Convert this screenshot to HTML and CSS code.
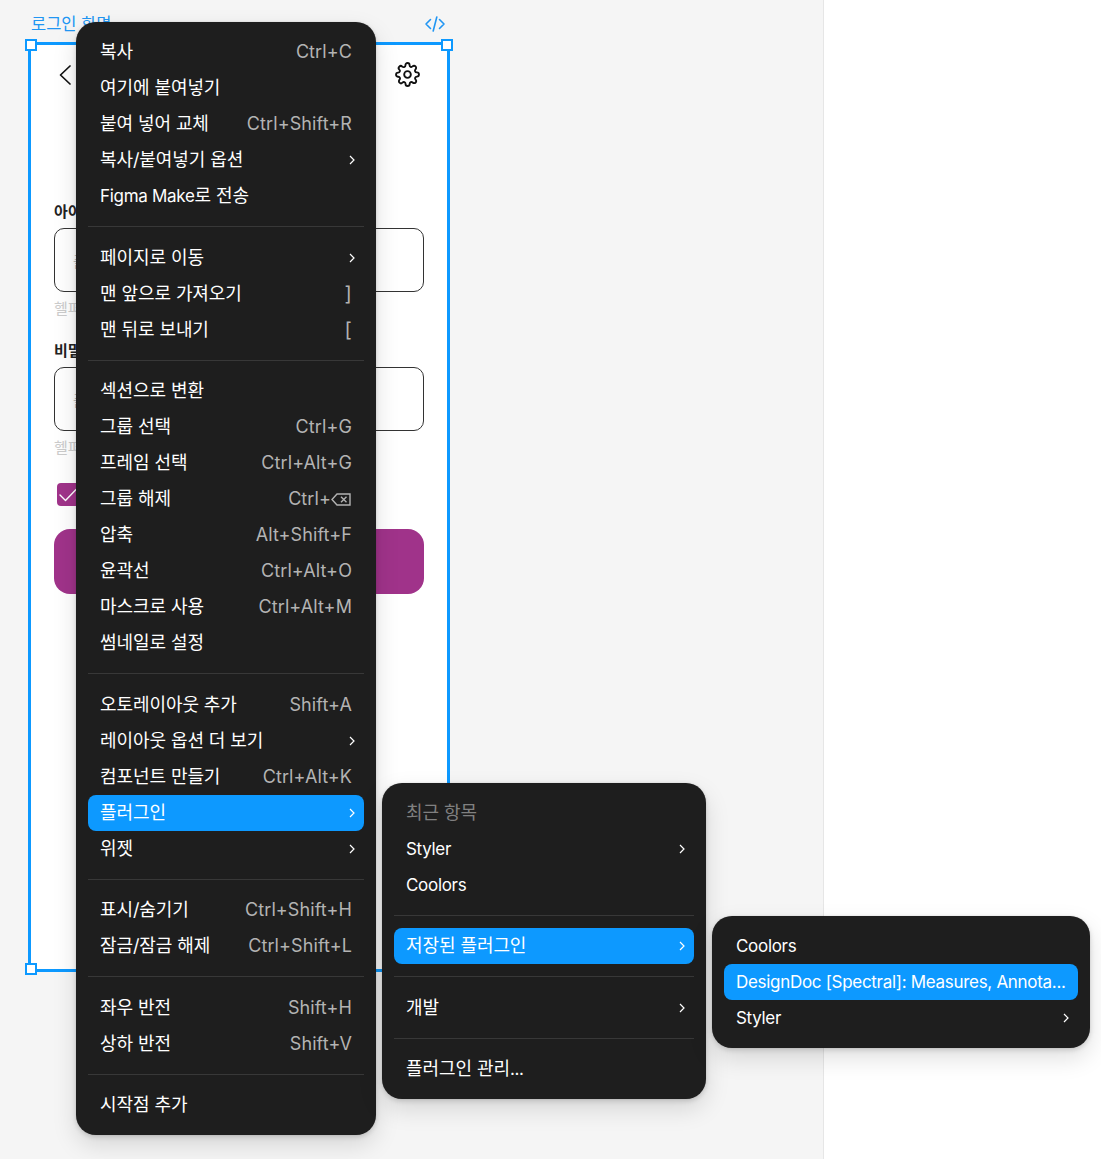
FILE: index.html
```html
<!DOCTYPE html>
<html lang="ko">
<head>
<meta charset="utf-8">
<title>로그인 화면</title>
<link rel="stylesheet" href="styles.css">
</head>
<body>
<div class="app">
  <main class="canvas">
    <div class="frame-title">로그인 화면</div>
    <svg class="code-icon" width="22" height="18" viewBox="0 0 22 18" fill="none" stroke="#2196f3" stroke-width="1.6" stroke-linecap="round" stroke-linejoin="round"><path d="M6.5 4.5 2 9l4.5 4.500M15.500 4.500 20 9l-4.500 4.500M12.800 2 9.200 16"/></svg>
    <section class="frame">
      <header class="frame-head">
        <svg width="14" height="24" viewBox="0 0 14 24" fill="none" stroke="#111" stroke-width="1.7" stroke-linecap="round" stroke-linejoin="round"><path d="M12 3 2.500 12l9.500 9"/></svg>
        <svg width="25" height="25" viewBox="0 0 24 24" fill="none" stroke="#111" stroke-width="1.800" stroke-linecap="round" stroke-linejoin="round"><circle cx="12" cy="12" r="3.200"/><path d="M19.400 15a1.650 1.650 0 0 0 .33 1.820l.06.06a2 2 0 1 1-2.830 2.830l-.06-.06a1.650 1.650 0 0 0-2.800 1.170V21a2 2 0 1 1-4 0v-.09a1.650 1.650 0 0 0-2.870-1.110l-.06.06a2 2 0 1 1-2.830-2.830l.06-.06a1.650 1.650 0 0 0-1.170-2.800H3a2 2 0 1 1 0-4h.09a1.650 1.650 0 0 0 1.110-2.870l-.06-.06a2 2 0 1 1 2.830-2.830l.06.06a1.650 1.650 0 0 0 1.820.33H9a1.650 1.650 0 0 0 1-1.510V3a2 2 0 1 1 4 0v.09a1.650 1.650 0 0 0 2.800 1.170l.06-.06a2 2 0 1 1 2.830 2.830l-.06.06a1.650 1.650 0 0 0-.33 1.820V9a1.650 1.650 0 0 0 1.510 1H21a2 2 0 1 1 0 4h-.09a1.650 1.650 0 0 0-1.510 1z"/></svg>
      </header>
      <form class="login">
        <div class="field">
          <div class="field-label">아이디</div>
          <div class="input"><span class="placeholder">플레이스홀더</span></div>
          <div class="helper">헬퍼 텍스트</div>
        </div>
        <div class="field">
          <div class="field-label">비밀번호</div>
          <div class="input"><span class="placeholder">플레이스홀더</span></div>
          <div class="helper">헬퍼 텍스트</div>
        </div>
        <div class="check">
          <svg width="18" height="14" viewBox="0 0 18 14" fill="none" stroke="#fff" stroke-width="1.400" stroke-linecap="round" stroke-linejoin="round"><path d="M1 7l5.500 5.500L17 1.500"/></svg>
        </div>
        <div class="submit"></div>
      </form>
      <i class="handle handle-tl"></i>
      <i class="handle handle-tr"></i>
      <i class="handle handle-bl"></i>
    </section>
  </main>
  <aside class="panel"></aside>
</div>

<nav class="menu menu-main">
  <div class="item"><span>복사</span><kbd>Ctrl+C</kbd></div>
  <div class="item"><span>여기에 붙여넣기</span></div>
  <div class="item"><span>붙여 넣어 교체</span><kbd>Ctrl+Shift+R</kbd></div>
  <div class="item"><span>복사/붙여넣기 옵션</span><svg class="chev" width="6" height="10" viewBox="0 0 6 10"><path d="M1 1l4 4-4 4"/></svg></div>
  <div class="item"><span><span class="lat">Figma Make</span>로 전송</span></div>
  <hr class="sep">
  <div class="item"><span>페이지로 이동</span><svg class="chev" width="6" height="10" viewBox="0 0 6 10"><path d="M1 1l4 4-4 4"/></svg></div>
  <div class="item"><span>맨 앞으로 가져오기</span><kbd class="kbd-bracket">]</kbd></div>
  <div class="item"><span>맨 뒤로 보내기</span><kbd class="kbd-bracket">[</kbd></div>
  <hr class="sep">
  <div class="item"><span>섹션으로 변환</span></div>
  <div class="item"><span>그룹 선택</span><kbd>Ctrl+G</kbd></div>
  <div class="item"><span>프레임 선택</span><kbd>Ctrl+Alt+G</kbd></div>
  <div class="item"><span>그룹 해제</span><kbd class="kbd-del">Ctrl+<svg width="20" height="13" viewBox="0 0 20 13" fill="none" stroke="#b3b3b3" stroke-width="1.400"><path d="M6 1h13v11H6L1 6.500z"/><path d="M10 3.800l5.500 5.500M15.500 3.800 10 9.300"/></svg></kbd></div>
  <div class="item"><span>압축</span><kbd>Alt+Shift+F</kbd></div>
  <div class="item"><span>윤곽선</span><kbd>Ctrl+Alt+O</kbd></div>
  <div class="item"><span>마스크로 사용</span><kbd>Ctrl+Alt+M</kbd></div>
  <div class="item"><span>썸네일로 설정</span></div>
  <hr class="sep">
  <div class="item"><span>오토레이아웃 추가</span><kbd>Shift+A</kbd></div>
  <div class="item"><span>레이아웃 옵션 더 보기</span><svg class="chev" width="6" height="10" viewBox="0 0 6 10"><path d="M1 1l4 4-4 4"/></svg></div>
  <div class="item"><span>컴포넌트 만들기</span><kbd>Ctrl+Alt+K</kbd></div>
  <div class="item active"><span>플러그인</span><svg class="chev" width="6" height="10" viewBox="0 0 6 10"><path d="M1 1l4 4-4 4"/></svg></div>
  <div class="item"><span>위젯</span><svg class="chev" width="6" height="10" viewBox="0 0 6 10"><path d="M1 1l4 4-4 4"/></svg></div>
  <hr class="sep">
  <div class="item"><span>표시/숨기기</span><kbd>Ctrl+Shift+H</kbd></div>
  <div class="item"><span>잠금/잠금 해제</span><kbd>Ctrl+Shift+L</kbd></div>
  <hr class="sep">
  <div class="item"><span>좌우 반전</span><kbd>Shift+H</kbd></div>
  <div class="item"><span>상하 반전</span><kbd>Shift+V</kbd></div>
  <hr class="sep">
  <div class="item"><span>시작점 추가</span></div>
</nav>

<nav class="menu menu-plugins">
  <div class="item item-heading"><span>최근 항목</span></div>
  <div class="item"><span class="lat">Styler</span><svg class="chev" width="6" height="10" viewBox="0 0 6 10"><path d="M1 1l4 4-4 4"/></svg></div>
  <div class="item"><span class="lat">Coolors</span></div>
  <hr class="sep">
  <div class="item active"><span>저장된 플러그인</span><svg class="chev" width="6" height="10" viewBox="0 0 6 10"><path d="M1 1l4 4-4 4"/></svg></div>
  <hr class="sep">
  <div class="item"><span>개발</span><svg class="chev" width="6" height="10" viewBox="0 0 6 10"><path d="M1 1l4 4-4 4"/></svg></div>
  <hr class="sep">
  <div class="item"><span>플러그인 관리<span class="lat">...</span></span></div>
</nav>

<nav class="menu menu-saved">
  <div class="item"><span class="lat">Coolors</span></div>
  <div class="item active"><span class="lat">DesignDoc [Spectral]: Measures, Annota...</span></div>
  <div class="item"><span class="lat">Styler</span><svg class="chev" width="6" height="10" viewBox="0 0 6 10"><path d="M1 1l4 4-4 4"/></svg></div>
</nav>
</body>
</html>
```

FILE: styles.css
```css
* { box-sizing: border-box; }
html, body { margin: 0; height: 100%; }
body {
  font-family: Inter, "Noto Sans CJK KR", "Noto Sans", sans-serif;
  overflow: hidden;
  background: #f5f5f5;
}
.app { display: flex; height: 1159px; }
.canvas { position: relative; width: 823px; flex: none; background: #f5f5f5; }
.panel { flex: 1; background: #fff; border-left: 1px solid #e6e6e6; }

.frame-title {
  position: absolute; left: 31px; top: 14px;
  font-size: 16.500px; line-height: 20px; color: #2196f3;
}
.code-icon { position: absolute; left: 424px; top: 15px; }

.frame {
  position: absolute; left: 28px; top: 42px;
  width: 422px; height: 930px;
  background: #fff;
  border: 3px solid #0d99ff;
}
.frame-head {
  display: flex; justify-content: space-between; align-items: center;
  padding: 16px 27px 0 27px;
  height: 43px;
}
.login { display: flex; flex-direction: column; padding: 0 23px; margin-top: 112px; }
.field { display: flex; flex-direction: column; }
.field + .field { margin-top: 20px; }
.field-label { font-size: 15px; line-height: 20px; font-weight: 600; color: #222; height: 28px; padding-top: 2px; }
.input {
  height: 64px; border: 1px solid #333; border-radius: 10px;
  display: flex; align-items: center; padding-left: 18px;
}
.placeholder { font-size: 15px; color: #bbb; }
.helper { font-size: 15px; line-height: 20px; color: #ccc; margin-top: 7px; }
.check {
  width: 40px; height: 23px; margin: 25px 0 0 3px;
  background: #a0338a; border-radius: 4px;
  display: flex; align-items: center; padding-left: 2px;
}
.submit { height: 65px; margin-top: 23px; background: #a0338a; border-radius: 16px; }

.handle {
  position: absolute; width: 12px; height: 12px;
  background: #fff; border: 2px solid #0d99ff;
}
.handle-tl { left: -6px; top: -6px; }
.handle-tr { right: -6px; top: -6px; }
.handle-bl { left: -6px; bottom: -6px; }

.menu {
  position: absolute;
  padding: 12px;
  background: #1e1e1e;
  border-radius: 20px;
  color: #fff;
  box-shadow: 0 2px 5px rgba(0,0,0,.15), 0 10px 24px rgba(0,0,0,.13), 0 0 1px rgba(0,0,0,.2);
}
.menu-main { left: 76px; top: 22px; width: 300px; }
.menu-plugins { left: 382px; top: 782.500px; width: 324px; }
.menu-saved { left: 712px; top: 916px; width: 378px; }

.item {
  display: flex; align-items: center; justify-content: space-between;
  height: 36px; padding: 0 12px;
  font-size: 18px; line-height: 24px;
  letter-spacing: -0.08px;
  border-radius: 8px;
  white-space: nowrap;
}
.item.active { background: #0d99ff; }
.item-heading { color: #808080; }
.item kbd { font: inherit; letter-spacing: 0.1px; color: #b3b3b3; }
.item .kbd-bracket { font-size: 20px; }
.kbd-del { display: flex; align-items: center; }
.kbd-del svg { margin-right: 1px; }
.lat { font-size: 17px; letter-spacing: -0.3px; }
.chev { fill: none; stroke: #fff; stroke-width: 1.200; flex: none; margin-right: -3px; }
.sep { height: 1px; margin: 12.250px 0; border: 0; background: #383838; }
```
